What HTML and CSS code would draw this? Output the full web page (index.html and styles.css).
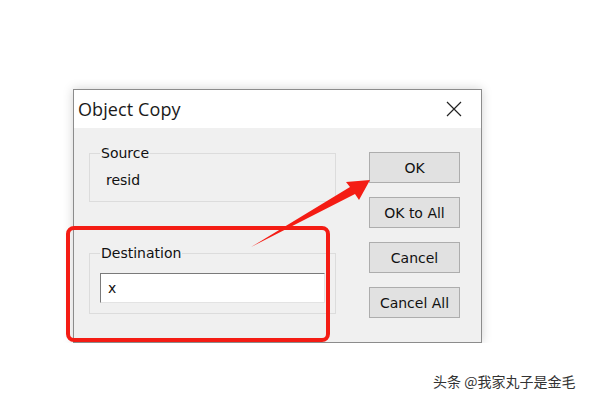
FILE: index.html
```html
<!DOCTYPE html>
<html lang="en">

<head>
    <meta charset="UTF-8">
    <title>Object Copy</title>
    <link rel="stylesheet" href="styles.css">
</head>

<body>

    <div class="dialog">
        <div class="titlebar">
            <span class="title">Object Copy</span>
            <svg class="close" width="16" height="16" viewBox="0 0 16 16">
                <path d="M1 1 L15 15 M15 1 L1 15" stroke="#222" stroke-width="1.2" fill="none"/>
            </svg>
        </div>
        <div class="dialog-body">
            <div class="groups">
                <fieldset class="group source">
                    <legend>Source</legend>
                    <p class="value">resid</p>
                </fieldset>
                <fieldset class="group dest">
                    <legend>Destination</legend>
                    <input class="field" type="text" value="x">
                </fieldset>
            </div>
            <div class="buttons">
                <button>OK</button>
                <button>OK to All</button>
                <button>Cancel</button>
                <button>Cancel All</button>
            </div>
        </div>
    </div>

    <!-- red annotation drawn over the screenshot -->
    <svg class="markup" width="600" height="400" viewBox="0 0 600 400">
        <rect x="68" y="228" width="260" height="112" rx="6" ry="6" fill="none" stroke="#f41c14" stroke-width="4"/>
        <polygon points="251,247 350,187 346,182 370,180 359,200 355,194" fill="#f41c14"/>
    </svg>

    <div class="watermark">头条 @我家丸子是金毛</div>

</body>

</html>
```

FILE: styles.css
```css
body {
    margin: 0;
    background: #fff;
    font-family: "DejaVu Sans", sans-serif;
    font-size: 14px;
    color: #111;
}

.dialog {
    margin: 89px 0 0 73px;
    width: 409px;
    height: 254px;
    box-sizing: border-box;
    border: 1px solid #8c8c8c;
    background: #f0f0f0;
    box-shadow: 0 0 10px rgba(0, 0, 0, 0.18);
    display: flex;
    flex-direction: column;
}

.titlebar {
    height: 38px;
    background: #fff;
    display: flex;
    align-items: center;
    justify-content: space-between;
    padding: 0 19px 0 4px;
}

.title {
    font-family: "Open Sans", sans-serif;
    font-size: 18px;
    color: #1a1a1a;
    letter-spacing: 0.1px;
}

.dialog-body {
    display: flex;
    padding: 17px 21px 0 15px;
}

.groups {
    width: 247px;
}

.group {
    margin: 0;
    padding: 0 10px;
    border: 1px solid #dcdcdc;
    box-sizing: border-box;
}

.group legend {
    padding: 0 1px;
    font-size: 14px;
    line-height: 16px;
}

.source {
    height: 57px;
}

.value {
    margin: 11px 0 0 6px;
    line-height: 16px;
}

.dest {
    margin-top: 43px;
    height: 69px;
}

.field {
    margin-top: 12px;
    width: 225px;
    height: 30px;
    box-sizing: border-box;
    border: 1px solid #7a7a7a;
    border-right-color: #e3e3e3;
    border-bottom-color: #e3e3e3;
    background: #fff;
    font-family: "DejaVu Sans", sans-serif;
    font-size: 14px;
    padding: 0 7px;
    color: #111;
}

.buttons {
    margin-left: auto;
    padding-top: 7px;
    display: flex;
    flex-direction: column;
    gap: 14px;
}

.buttons button {
    width: 91px;
    height: 31px;
    background: #e1e1e1;
    border: 1px solid #adadad;
    font-family: "DejaVu Sans", sans-serif;
    font-size: 14px;
    color: #111;
    padding: 0;
}

.markup {
    position: absolute;
    left: 0;
    top: 0;
}

.watermark {
    position: absolute;
    left: 433px;
    top: 371px;
    font-family: "Noto Sans CJK SC", sans-serif;
    font-size: 14px;
    color: #333;
}
```
